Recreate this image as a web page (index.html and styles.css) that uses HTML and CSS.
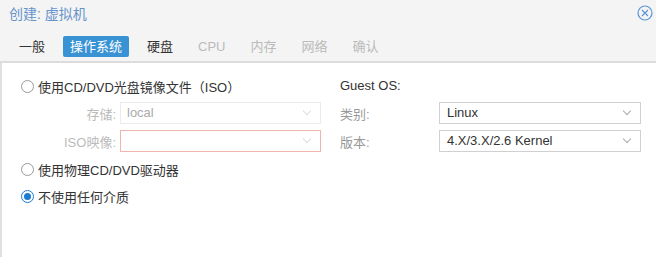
FILE: index.html
```html
<!DOCTYPE html>
<html lang="zh">
<head>
    <meta charset="UTF-8">
    <title>创建: 虚拟机</title>
    <link rel="stylesheet" href="styles.css">
</head>
<body>
    <div class="window">
        <div class="header">
            <div class="title-row">
                <span class="title">创建: 虚拟机</span>
                <span class="close">
                    <svg width="16" height="16" viewBox="0 0 16 16">
                        <circle cx="8" cy="8" r="7" fill="none" stroke="#5b95d6" stroke-width="1.2"/>
                        <path d="M5 5 L11 11 M11 5 L5 11" stroke="#5b95d6" stroke-width="1.2"/>
                    </svg>
                </span>
            </div>
            <div class="tabs">
                <span class="tab">一般</span>
                <span class="tab active">操作系统</span>
                <span class="tab">硬盘</span>
                <span class="tab disabled">CPU</span>
                <span class="tab disabled">内存</span>
                <span class="tab disabled">网络</span>
                <span class="tab disabled">确认</span>
            </div>
        </div>

        <div class="body">
            <div class="col left">
                <label class="radio-row first">
                    <span class="radio"></span>
                    <span>使用CD/DVD光盘镜像文件（ISO）</span>
                </label>
                <div class="field">
                    <span class="field-label muted">存储:</span>
                    <div class="select disabled">local<span class="arrow"></span></div>
                </div>
                <div class="field">
                    <span class="field-label muted">ISO映像:</span>
                    <div class="select invalid"><span class="arrow"></span></div>
                </div>
                <label class="radio-row second">
                    <span class="radio"></span>
                    <span>使用物理CD/DVD驱动器</span>
                </label>
                <label class="radio-row">
                    <span class="radio checked"></span>
                    <span>不使用任何介质</span>
                </label>
            </div>

            <div class="col right">
                <div class="section-title">Guest OS:</div>
                <div class="field wide">
                    <span class="field-label">类别:</span>
                    <div class="select">Linux<span class="arrow"></span></div>
                </div>
                <div class="field wide">
                    <span class="field-label">版本:</span>
                    <div class="select">4.X/3.X/2.6 Kernel<span class="arrow"></span></div>
                </div>
            </div>
        </div>
    </div>
</body>
</html>
```

FILE: styles.css
```css
* {
    margin: 0;
    padding: 0;
    box-sizing: border-box;
}

body {
    font-family: "Liberation Sans", "Noto Sans CJK SC", sans-serif;
    font-size: 13px;
    color: #333;
    background: #fff;
    width: 656px;
    height: 257px;
    overflow: hidden;
}

.window {
    height: 257px;
    display: flex;
    flex-direction: column;
}

.header {
    background: #f4f4f4;
    border-bottom: 2px solid #dcdcdc;
    height: 63px;
}

.title-row {
    display: flex;
    justify-content: space-between;
    align-items: center;
    height: 26px;
    padding: 0 0 0 9px;
}

.title {
    color: #6593cb;
    font-size: 14px;
}

.close {
    display: flex;
    margin-right: 3px;
}

.tabs {
    display: flex;
    align-items: center;
    padding: 10px 0 0 12px;
}

.tab {
    padding: 2px 7px;
    margin-right: 11px;
    line-height: 17px;
    border-radius: 2px;
    color: #333;
}

.tab.active {
    background: #3892d4;
    color: #fff;
}

.tab.disabled {
    color: #bbb;
}

.body {
    flex: 1;
    display: flex;
    border-left: 2px solid #e0e0e0;
    padding: 10px 0 0 18px;
}

.col.left {
    width: 320px;
}

.col.right {
    width: 302px;
}

.radio-row {
    display: flex;
    align-items: center;
    height: 27px;
}

.radio-row.first {
    height: 26px;
}

.radio-row.second {
    margin-top: 1px;
}

.radio {
    width: 13px;
    height: 13px;
    border: 1px solid #999;
    border-radius: 50%;
    margin: 0 4px 0 1px;
    position: relative;
}

.radio.checked {
    border-color: #1a7bd2;
    border-width: 1.5px;
}

.radio.checked::after {
    content: "";
    position: absolute;
    left: 2px;
    top: 2px;
    width: 7px;
    height: 7px;
    border-radius: 50%;
    background: #1a7bd2;
}

.field {
    display: flex;
    align-items: center;
    height: 28px;
}

.field-label {
    width: 100px;
    text-align: right;
    padding-right: 4px;
}

.field-label.muted {
    color: #bbb;
}

.select {
    width: 201px;
    height: 22px;
    border: 1px solid #d0d0d0;
    padding: 0 0 0 6px;
    line-height: 20px;
    position: relative;
    color: #333;
}

.select.disabled {
    border-color: #ebebeb;
    color: #aaa;
}

.select.invalid {
    border-color: #f1b5ae;
}

.arrow {
    position: absolute;
    right: 10px;
    top: 5px;
    width: 6px;
    height: 6px;
    border-right: 1px solid #aaa;
    border-bottom: 1px solid #aaa;
    transform: rotate(45deg);
}

.select.disabled .arrow,
.select.invalid .arrow {
    border-color: #ddd;
}

.section-title {
    height: 26px;
    line-height: 26px;
}

.field.wide .field-label {
    width: 99px;
    text-align: left;
    color: #999;
}

.field.wide .select {
    width: 202px;
    padding-left: 7px;
}
```
